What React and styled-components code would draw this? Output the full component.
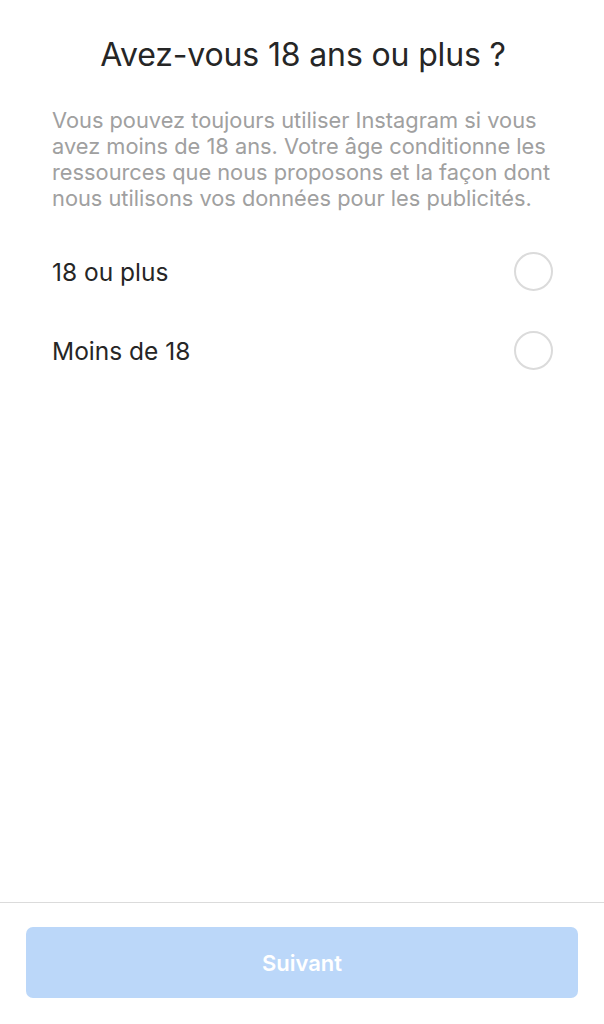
import styled, { createGlobalStyle } from "styled-components";
import { useState } from "react";

const GlobalStyle = createGlobalStyle`
    html, body {
        margin: 0;
        padding: 0;
        background: #ffffff;
    }
    #root {
        height: 1024px;
    }
`;

const options = ["18 ou plus", "Moins de 18"];

export default function App(){

    const [selected, setSelected] = useState(null);

    return(
    <>
        <GlobalStyle />
        <Screen>
            <Content>
                <Title>Avez-vous 18 ans ou plus ?</Title>
                <Description>
                    Vous pouvez toujours utiliser Instagram si vous avez moins de 18 ans. Votre âge conditionne les ressources que nous proposons et la façon dont nous utilisons vos données pour les publicités.
                </Description>
                <OptionList>
                    {options.map((label, i) => (
                        <Option key={label} onClick={() => setSelected(i)}>
                            <OptionLabel>{label}</OptionLabel>
                            <Radio checked={selected === i} />
                        </Option>
                    ))}
                </OptionList>
            </Content>
            <Footer>
                <NextButton disabled={selected === null}>Suivant</NextButton>
            </Footer>
        </Screen>
    </>
    );
}

const Screen = styled.div`
    width: 604px;
    height: 1024px;
    display: flex;
    flex-direction: column;
    background: #ffffff;
    font-family: "Inter", "Roboto", sans-serif;
    color: #262626;
`

const Content = styled.div`
    flex: 1;
    display: flex;
    flex-direction: column;
    padding: 35px 50px 0 52px;
`

const Title = styled.h1`
    margin: 0;
    text-align: center;
    font-size: 32px;
    font-weight: 400;
    line-height: 40px;
    letter-spacing: -0.15px;
    color: #262626;
`

const Description = styled.p`
    margin: 32px 0 0 0;
    font-size: 21.8px;
    line-height: 26px;
    color: #a0a0a0;
    font-weight: 400;
`

const OptionList = styled.div`
    margin-top: 21px;
    display: flex;
    flex-direction: column;
`

const Option = styled.div`
    height: 79px;
    display: flex;
    align-items: center;
    justify-content: space-between;
    cursor: pointer;
`

const OptionLabel = styled.span`
    font-size: 24.5px;
    color: #262626;
`

const Radio = styled.span`
    width: 35px;
    height: 35px;
    border-radius: 50%;
    border: 2px solid #dbdbdb;
    margin-right: 1px;
    background: ${props => props.checked ? "#0095f6" : "transparent"};
`

const Footer = styled.div`
    border-top: 1px solid #dbdbdb;
    padding: 24px 26px 26px 26px;
`

const NextButton = styled.button`
    width: 100%;
    height: 71px;
    border: none;
    border-radius: 7px;
    background: ${props => props.disabled ? "#bbd7f9" : "#0095f6"};
    color: #ffffff;
    font-family: "Inter", "Roboto", sans-serif;
    font-size: 22px;
    font-weight: 600;
`
